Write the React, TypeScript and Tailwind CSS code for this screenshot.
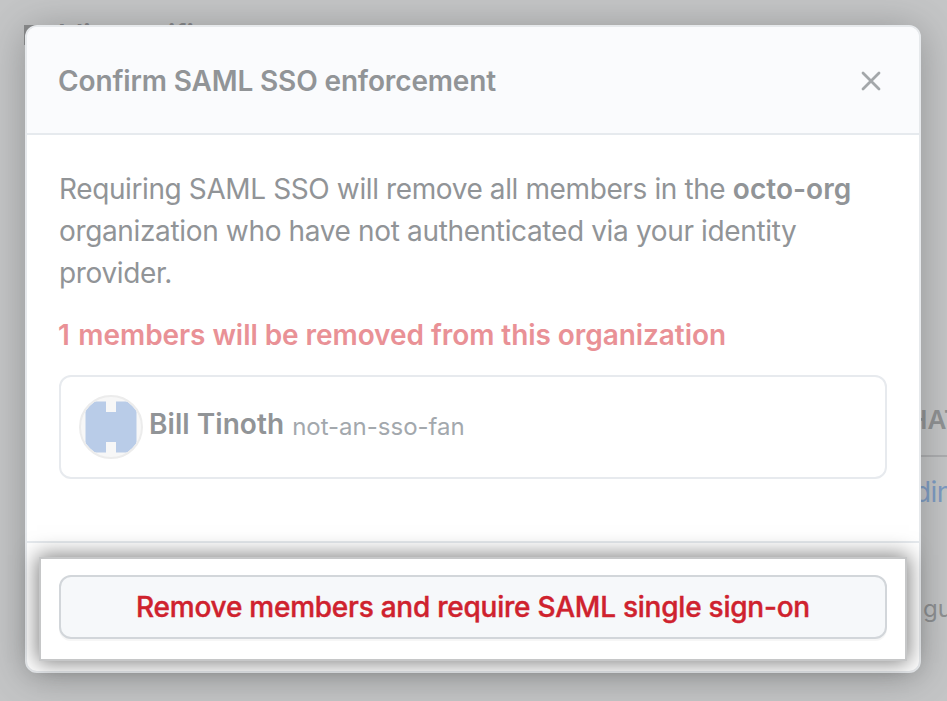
const font = "[font-family:Inter,'Liberation_Sans',sans-serif]";

function Backdrop() {
  return (
    <div className="absolute inset-0" aria-hidden="true">
      <div className="absolute left-6 top-[25px] h-5 w-5 bg-[#8b8c8d]" />
      <div className="absolute left-[58px] top-[18px] flex whitespace-nowrap text-[28px] leading-[34px] font-semibold text-[#85878a]">
        <span className="w-[110px]">Idi</span>
        <span>ifi</span>
      </div>
      <div className="absolute left-[908px] top-[403px] whitespace-nowrap text-[26px] leading-[34px] font-semibold text-[#909294]">
        HAT
      </div>
      <div className="absolute left-[900px] top-[455px] h-[2px] w-[47px] bg-[#adaeb0]" />
      <div className="absolute left-[914px] top-[474px] whitespace-nowrap text-[28px] leading-[36px] tracking-[-0.6px] text-[#7d9cc4]">
        ding
      </div>
      <div className="absolute left-[923px] top-[592px] whitespace-nowrap text-[24px] leading-[34px] text-[#8f9193]">
        gu
      </div>
    </div>
  );
}

function Avatar() {
  return (
    <svg width="64" height="64" viewBox="0 0 64 64" className="shrink-0">
      <defs>
        <clipPath id="round">
          <circle cx="32" cy="32" r="30" />
        </clipPath>
      </defs>
      <circle cx="32" cy="32" r="31" fill="#f7f7f7" />
      <path
        clipPath="url(#round)"
        fill="#b9cce8"
        d="M15 6.5H27v10.500h10V6.500h12L57.500 15v34L49 57.500H37V47H27v10.500H15L6.500 49V15z"
      />
      <circle cx="32" cy="32" r="31" fill="none" stroke="#ececec" strokeWidth="2" />
    </svg>
  );
}

export default function App() {
  return (
    <div className={`relative h-[701px] w-[947px] overflow-hidden bg-[#c5c6c7] pl-[25px] pt-[25px] ${font}`}>
      <Backdrop />
      <div className="relative flex h-[648px] w-[896px] flex-col rounded-xl border-2 border-[#e6e9ec] bg-white text-[#919497] shadow-[0_4px_40px_rgba(60,62,64,0.38)]">
        <header className="flex h-[108px] shrink-0 items-center justify-between rounded-t-[10px] border-b-2 border-[#e6eaee] bg-[#fafbfd] pl-[31px] pr-[38px] pt-[2px]">
          <h1 className="whitespace-nowrap text-[28px] font-semibold tracking-[-0.14px]">Confirm SAML SSO enforcement</h1>
          <button aria-label="Close">
            <svg width="20" height="20" viewBox="0 0 20 20" fill="none" stroke="#a3a7aa" strokeWidth="2.8" strokeLinecap="round">
              <path d="M2 2l16 16M18 2L2 18" />
            </svg>
          </button>
        </header>
        <main className="flex h-[408px] shrink-0 flex-col border-b-2 border-[#e6eaee] px-8 pt-[33px]">
          <p className="whitespace-nowrap text-[28px] leading-[42px]">
            <span className="tracking-[-0.39px]">Requiring SAML SSO will remove all members in the </span>
            <b className="font-semibold tracking-[0.05px]">octo-org</b>
            <br />
            <span className="tracking-[-0.35px]">organization who have not authenticated via your identity</span>
            <br />
            <span className="tracking-[-0.36px]">provider.</span>
          </p>
          <p className="mt-5 whitespace-nowrap text-[28px] leading-[42px] font-semibold text-[#e99196]">
            <span className="-ml-px mr-[1.5px]">1</span>
            <span className="tracking-[-0.06px]"> members will be removed from this organization</span>
          </p>
          <div className="mt-[19px] flex h-[104px] items-center rounded-xl border-2 border-[#e7eaee] pl-[18px]">
            <Avatar />
            <div className="mb-1 ml-[6px] flex items-baseline whitespace-nowrap">
              <span className="-translate-y-px text-[28px] font-semibold tracking-[0.05px]">Bill Tinoth</span>
              <span className="ml-2 text-[24px] text-[#a3a8ad]">not-an-sso-fan</span>
            </div>
          </div>
        </main>
        <footer className="flex grow px-3 pt-[14px]">
          <div className="h-[104px] w-[868px] border-2 border-[#c6c7c8] bg-white px-[18px] pt-4 shadow-[0_0_20px_2px_rgba(0,0,0,0.5)]">
            <button className="flex h-16 w-full items-center justify-center rounded-xl border-2 border-[#d2d6da] bg-[#f6f8fa] text-[28px] font-medium text-[#cf222e] shadow-[0_2px_0_rgba(27,31,36,0.04)]">
              <span className="whitespace-nowrap tracking-[-0.24px] [-webkit-text-stroke:0.4px_#cf222e]">
                Remove members and require SAML single sign-on
              </span>
            </button>
          </div>
        </footer>
      </div>
    </div>
  );
}
